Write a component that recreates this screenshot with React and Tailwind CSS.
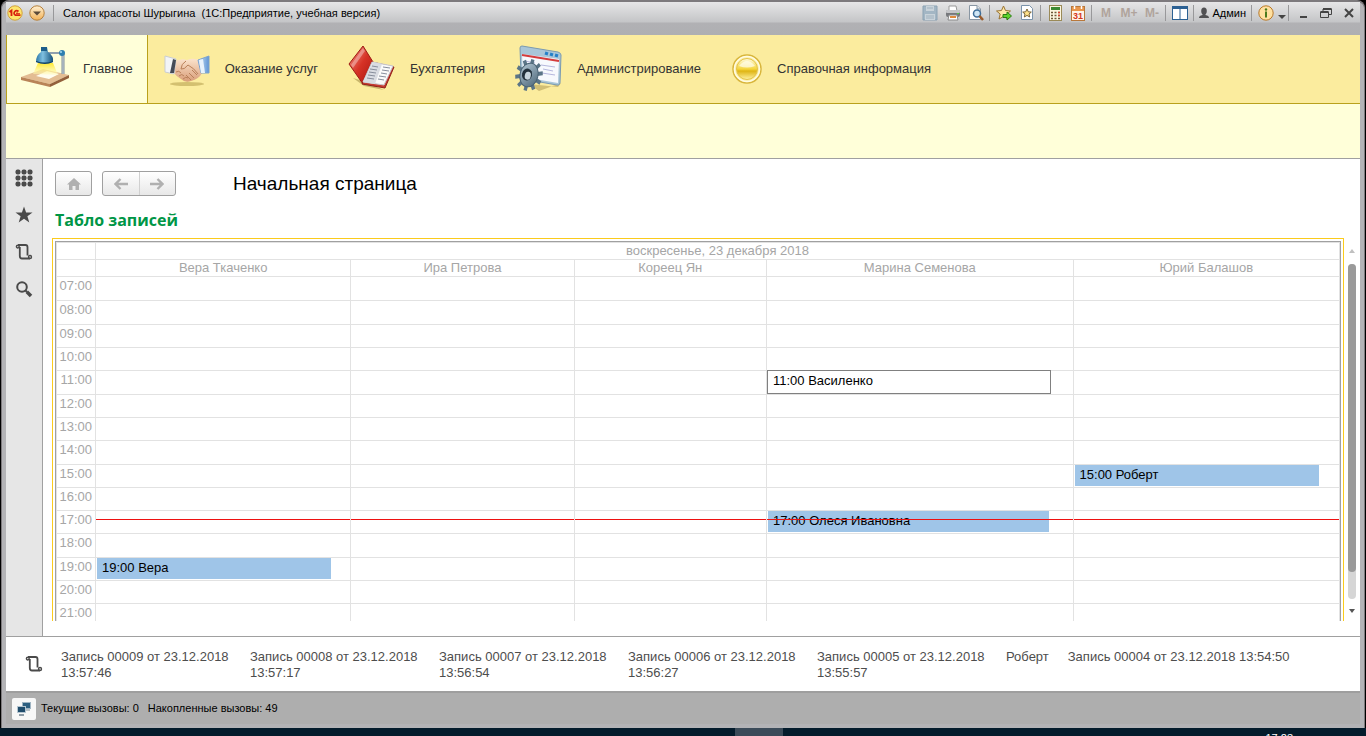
import React, { useState } from 'react';

const employees = [
  { name: 'Вера Ткаченко', col: 'w-[19.9%]' },
  { name: 'Ира Петрова', col: 'w-[17.4%]' },
  { name: 'Кореец Ян', col: 'w-[15%]' },
  { name: 'Марина Семенова', col: 'w-[23.9%]' },
  { name: 'Юрий Балашов', col: '' }
];

const hours = [
  { time: '07:00', tall: true },
  { time: '08:00', tall: true },
  { time: '09:00' },
  { time: '10:00' },
  { time: '11:00', tall: true },
  { time: '12:00' },
  { time: '13:00' },
  { time: '14:00', tall: true },
  { time: '15:00' },
  { time: '16:00' },
  { time: '17:00', now: true },
  { time: '18:00', tall: true },
  { time: '19:00' },
  { time: '20:00' },
  { time: '21:00' }
];

const bookings = [
  { time: '11:00', employee: 'Марина Семенова', client: 'Василенко' },
  { time: '15:00', employee: 'Юрий Балашов', client: 'Роберт' },
  { time: '17:00', employee: 'Марина Семенова', client: 'Олеся Ивановна' },
  { time: '19:00', employee: 'Вера Ткаченко', client: 'Вера' }
];

const historyItems = [
  { text: 'Запись 00009 от 23.12.2018 13:57:46', wrap: true },
  { text: 'Запись 00008 от 23.12.2018 13:57:17', wrap: true },
  { text: 'Запись 00007 от 23.12.2018 13:56:54', wrap: true },
  { text: 'Запись 00006 от 23.12.2018 13:56:27', wrap: true },
  { text: 'Запись 00005 от 23.12.2018 13:55:57', wrap: true },
  { text: 'Роберт' },
  { text: 'Запись 00004 от 23.12.2018 13:54:50' }
];

const LampIcon = () => (
  <svg width="48" height="48" viewBox="0 0 48 48">
    <defs>
      <linearGradient id="lampBeam" x1="0" y1="0" x2="0" y2="1">
        <stop offset="0" stopColor="#ffe92e" />
        <stop offset="1" stopColor="#fffbc4" stopOpacity="0.5" />
      </linearGradient>
      <linearGradient id="lampShade" x1="0" y1="0" x2="1" y2="0">
        <stop offset="0" stopColor="#2c78a8" />
        <stop offset="0.4" stopColor="#7fc0e0" />
        <stop offset="1" stopColor="#135079" />
      </linearGradient>
    </defs>
    <path d="M0 32 L22 24 L48 30 L29 39 Z" fill="#e3bd93" />
    <path d="M0 32 L29 39 V42 L0 35 Z" fill="#b98458" />
    <path d="M29 39 L48 30 V33 L29 42 Z" fill="#93603b" />
    <path d="M15 31 L26 26 L38 29 L28 34 Z" fill="#fffdf0" />
    <path d="M17 18 L32 18 L37 30 L12 29 Z" fill="url(#lampBeam)" />
    <path d="M42 9 V29" stroke="#7d8c99" strokeWidth="3" />
    <path d="M42 9 V29" stroke="#cfd8df" strokeWidth="1" />
    <path d="M26 8 H40" stroke="#8fa0ad" strokeWidth="2" />
    <path d="M20 2 L26 2 L27 7 Q33 11 32 17 Q24 20 15 17 Q15 10 20 7 Z" fill="url(#lampShade)" />
    <path d="M20 2 H26 V6 H20 Z" fill="#1d5e8a" />
    <path d="M15 16 Q24 19 32 16 V17 Q24 21 15 17 Z" fill="#0f4166" />
    <circle cx="41" cy="8" r="3" fill="#2d7fb0" />
    <circle cx="40" cy="7" r="1" fill="#a8d8ef" />
  </svg>
);

const HandshakeIcon = () => (
  <svg width="48" height="48" viewBox="0 0 48 48">
    <defs>
      <linearGradient id="skin" x1="0" y1="0" x2="0" y2="1">
        <stop offset="0" stopColor="#fbe3cc" />
        <stop offset="1" stopColor="#d99d78" />
      </linearGradient>
      <linearGradient id="cuffBlue" x1="0" y1="0" x2="1" y2="0">
        <stop offset="0" stopColor="#cfe5f7" />
        <stop offset="1" stopColor="#5d94d4" />
      </linearGradient>
    </defs>
    <ellipse cx="24" cy="39" rx="17" ry="2" fill="#b9a452" opacity="0.6" />
    <path d="M10 17 Q18 13 24 15 Q31 12 38 16 L39 28 Q36 34 28 36 Q22 38 18 34 Q13 31 10 27 Z" fill="url(#skin)" />
    <path d="M23 16 Q18 19 18 24 Q21 25 25 20 Q31 23 35 29" fill="none" stroke="#b9805a" strokeWidth="1" />
    <path d="M13 27 Q16 25 18 28 M16 31 Q19 28 21 31 M20 34 Q23 31 25 33 M26 28 L31 33 M23 30 L28 35 M29 25 L34 30" fill="none" stroke="#b9805a" strokeWidth="1" />
    <path d="M2 11 L13 14 L11 29 L2 27 Z" fill="#f2f4f7" stroke="#c9cdd3" strokeWidth="1" />
    <path d="M10 14 L13 15 L11 28 L7 28 Z" fill="#454b57" />
    <path d="M46 11 L35 15 L38 28 L46 28 Z" fill="url(#cuffBlue)" stroke="#7ca3cf" strokeWidth="1" />
    <path d="M36 15 L40 14 L42 28 L38 28 Z" fill="#e8f3fc" />
  </svg>
);

const LedgerIcon = () => (
  <svg width="48" height="48" viewBox="0 0 48 48">
    <defs>
      <linearGradient id="cover" x1="0" y1="0" x2="1" y2="1">
        <stop offset="0" stopColor="#f59a8c" />
        <stop offset="0.5" stopColor="#d63226" />
        <stop offset="1" stopColor="#a8150f" />
      </linearGradient>
    </defs>
    <path d="M5 33 L16 41 L36 45 L15 36 Z" fill="#a8924a" opacity="0.6" />
    <path d="M15 1 L25 17 L15 39 L1 19 Z" fill="url(#cover)" stroke="#9d1a14" strokeWidth="1" />
    <path d="M24 17 L46 22 L37 43 L14 39 Z" fill="#c63a30" stroke="#8f211b" strokeWidth="1" />
    <path d="M24 17 L45 21 L36 40 L15 37 Z" fill="#fafafa" stroke="#c6c6cc" strokeWidth="1" />
    <path d="M25 17 L34 19 L27 39 L15 37 Z" fill="#d9dce2" />
    <path d="M24 21 L30 22 M22 24 L29 25 M21 27 L28 28 M20 30 L27 31 M19 33 L26 34 M35 22 L42 23 M34 25 L41 26 M33 28 L39 29 M31 31 L38 32 M30 34 L36 35" stroke="#878e9c" strokeWidth="1" />
    <path d="M3 20 L15 3 L17 6 L5 23 Z" fill="#ffffff" opacity="0.35" />
  </svg>
);

const gearTeeth = [0, 36, 72, 108, 144, 180, 216, 252, 288, 324];

const AdminIcon = () => (
  <svg width="48" height="48" viewBox="0 0 48 48">
    <defs>
      <linearGradient id="gearFill" x1="0" y1="0" x2="1" y2="1">
        <stop offset="0" stopColor="#b5c9d6" />
        <stop offset="1" stopColor="#4c6678" />
      </linearGradient>
    </defs>
    <path d="M14 39 L43 42 L46 38 L24 46 Z" fill="#a8924a" opacity="0.5" />
    <path d="M7 1 L43 7 Q46 8 46 10 L45 38 Q44 41 42 40 L8 34 Q6 33 6 31 L5 3 Q5 1 7 1 Z" fill="#a9c6d8" stroke="#7a9ab0" strokeWidth="1" />
    <path d="M7 9 L44 14 L43 38 L8 32 Z" fill="#f7f9fd" />
    <path d="M7 10 L44 16" stroke="#d43c3c" strokeWidth="2" />
    <path d="M30 8 l3 1 M35 9 l3 1 M40 10 l3 1" stroke="#2580c8" strokeWidth="3" />
    <path d="M10 16 L20 18 M26 20 L40 22 M28 24 L38 26 M27 28 L40 30" stroke="#b5b7dd" strokeWidth="1" />
    <g transform="translate(14 30) rotate(14)">
      {gearTeeth.map(angle => (
        <rect key={angle} x="-2" y="-16" width="4" height="8" fill="#5b7587" transform={'scale(0.85 1) rotate(' + angle + ')'} />
      ))}
      <ellipse rx="9" ry="12" fill="url(#gearFill)" stroke="#4a6374" strokeWidth="1" />
      <ellipse cx="-2" rx="5" ry="6" fill="#22313c" />
      <ellipse cx="-1" cy="1" rx="3" ry="4" fill="#c8d6de" />
    </g>
  </svg>
);

const GoldDiscIcon = () => (
  <svg width="32" height="32" viewBox="0 0 32 32">
    <defs>
      <linearGradient id="goldDisc" x1="0" y1="0" x2="0" y2="1">
        <stop offset="0" stopColor="#fffbe0" />
        <stop offset="0.5" stopColor="#f5d63d" />
        <stop offset="0.6" stopColor="#dfb514" />
        <stop offset="1" stopColor="#fff2a0" />
      </linearGradient>
    </defs>
    <circle cx="16" cy="16" r="14" fill="#fbeea0" stroke="#d8b53c" strokeWidth="1.5" />
    <circle cx="16" cy="16" r="12.5" fill="none" stroke="#fffbe0" strokeWidth="1.5" />
    <circle cx="16" cy="16" r="10.5" fill="url(#goldDisc)" stroke="#e3c24a" strokeWidth="1" />
    <path d="M8 13 Q16 3 24 13 Q16 16 8 13 Z" fill="#fffdf0" opacity="0.7" />
  </svg>
);

const ScrollIcon = () => (
  <svg width="18" height="18" viewBox="0 0 18 18" fill="none" stroke="#4a4a4a" strokeWidth="1.8">
    <path d="M3 2 H10.5 Q12.5 2 12.5 4 V12.5" />
    <path d="M4.8 4 V13 Q4.8 15.5 7 15.5 H15" />
    <circle cx="2.8" cy="3.6" r="1.4" strokeWidth="1.4" />
    <circle cx="15" cy="14" r="1.5" strokeWidth="1.4" />
  </svg>
);

const GridIcon = () => (
  <svg width="18" height="18" viewBox="0 0 18 18" fill="#4a4a4a">
    {[3, 9, 15].map(y => [3, 9, 15].map(x => (
      <rect key={x + '-' + y} x={x - 2.5} y={y - 2.5} width="5" height="5" rx="2" />
    )))}
  </svg>
);

const StarIcon = () => (
  <svg width="18" height="18" viewBox="0 0 18 18">
    <path d="M9 0.5 L11.1 6.5 H17.5 L12.4 10.3 L14.3 16.5 L9 12.8 L3.7 16.5 L5.6 10.3 L0.5 6.5 H6.9 Z" fill="#4a4a4a" />
  </svg>
);

const SearchIcon = () => (
  <svg width="18" height="18" viewBox="0 0 18 18" fill="none" stroke="#4a4a4a">
    <circle cx="7" cy="7" r="4.8" strokeWidth="2" />
    <path d="M10.5 10.5 L12 12" strokeWidth="2" />
    <path d="M11.8 11.8 L16 16" strokeWidth="3.5" />
  </svg>
);

const SaveIcon = () => (
  <svg width="16" height="16" viewBox="0 0 16 16">
    <path d="M1 1 H15 V15 H1 Z" fill="#a3b6c4" stroke="#8ba2b3" />
    <path d="M4 1 H12 V6 H4 Z" fill="#c9d3da" />
    <path d="M3 9 H13 V15 H3 Z" fill="#c9d3da" />
    <path d="M4 11 H12 M4 13 H12 M5 3 H11" stroke="#9fb0bd" />
  </svg>
);

const PrinterIcon = () => (
  <svg width="16" height="16" viewBox="0 0 16 16">
    <path d="M4 1 H11 L12 6 H4 Z" fill="#fff" stroke="#999" />
    <rect x="1" y="5" width="14" height="7" rx="2" fill="#77797d" />
    <rect x="1" y="5" width="14" height="3" rx="1" fill="#c5c6c9" />
    <path d="M4 10 H12 L13 15 H3 Z" fill="#fff" stroke="#8a8a8a" />
    <path d="M5 12 H11" stroke="#e08a3c" strokeWidth="2" />
    <rect x="12" y="8" width="2" height="1" fill="#5bc44c" />
  </svg>
);

const PreviewIcon = () => (
  <svg width="16" height="16" viewBox="0 0 16 16">
    <path d="M1.5 0.5 H9 L12.5 4 V14.5 H1.5 Z" fill="#fff" stroke="#8996a3" />
    <path d="M9 0.5 V4 H12.5" fill="#dfe6ec" stroke="#8996a3" />
    <circle cx="9" cy="8.5" r="3.5" fill="#cfe6f5" stroke="#3f6f9a" strokeWidth="1.5" />
    <path d="M11.5 11 L15 15" stroke="#9a5a2a" strokeWidth="2.5" />
  </svg>
);

const AddFavoriteIcon = () => (
  <svg width="16" height="16" viewBox="0 0 16 16">
    <path d="M7.5 1 L9.5 5.5 L14.5 6 L10.8 9 L12 14 L7.5 11.5 L3 14 L4.2 9 L0.5 6 L5.5 5.5 Z" fill="#ffe9a8" stroke="#9a7433" />
    <path d="M7 9.5 H11 V7 L15.5 11 L11 15 V12.5 H7 Z" fill="#5fd42b" stroke="#2a7d13" />
  </svg>
);

const FavoritesIcon = () => (
  <svg width="16" height="16" viewBox="0 0 16 16">
    <path d="M2.5 0.5 H10.5 L13.5 3.5 V14.5 H2.5 Z" fill="#fff" stroke="#7b93aa" />
    <path d="M8 4 L9.3 6.8 L12.3 7.1 L10 9 L10.7 12 L8 10.4 L5.3 12 L6 9 L3.7 7.1 L6.7 6.8 Z" fill="#ffe28a" stroke="#7a6538" />
  </svg>
);

const CalculatorIcon = () => (
  <svg width="16" height="16" viewBox="0 0 16 16">
    <rect x="2.5" y="0.5" width="12" height="15" fill="#fdf7df" stroke="#9a8a58" />
    <rect x="4" y="2" width="9" height="3" fill="#3c8a34" />
    <path d="M4 7.5 H13 M4 10.5 H13 M4 13.5 H13" stroke="#6c5a3a" strokeWidth="1.5" strokeDasharray="2 1.5" />
    <path d="M11 7.5 H13 M11 10.5 H13" stroke="#d9432f" strokeWidth="1.5" />
  </svg>
);

const CalendarIcon = () => (
  <svg width="16" height="16" viewBox="0 0 16 16">
    <rect x="1.5" y="1.5" width="13" height="14" fill="#fff4e8" stroke="#b8783c" />
    <rect x="2" y="2" width="12" height="4" fill="#e8964c" />
    <path d="M4.5 1 V4 M11.5 1 V4" stroke="#fff" strokeWidth="1.5" />
    <text x="8" y="14" textAnchor="middle" fontFamily="Liberation Sans" fontWeight="bold" fontSize="9" fill="#d5361c">31</text>
  </svg>
);

const WindowsIcon = () => (
  <svg width="16" height="16" viewBox="0 0 16 16">
    <rect x="0.5" y="1.5" width="15" height="13" fill="#fff" stroke="#2c6193" />
    <rect x="0" y="1" width="16" height="3" fill="#2c6193" />
    <path d="M8 3 V15" stroke="#2c6193" />
  </svg>
);

const UserIcon = () => (
  <svg width="10" height="12" viewBox="0 0 10 12" fill="#505052">
    <ellipse cx="5" cy="4" rx="2.8" ry="3.5" />
    <path d="M0 11 Q0 8.5 3.5 8 V6 H6.5 V8 Q10 8.5 10 11 Z" />
  </svg>
);

const InfoIcon = () => (
  <svg width="16" height="16" viewBox="0 0 16 16">
    <circle cx="8" cy="8" r="7.2" fill="#ffe0a0" stroke="#b97a2a" />
    <circle cx="8" cy="4.5" r="1.2" fill="#4b7a1c" />
    <path d="M8 6.5 V12.5" stroke="#4b7a1c" strokeWidth="2" />
  </svg>
);

const LogoIcon = () => (
  <svg width="16" height="16" viewBox="0 0 16 16">
    <circle cx="8" cy="8" r="7.2" fill="#fde56c" stroke="#d0a13c" />
    <path d="M2.5 7 L4.5 5.5 V11" fill="none" stroke="#d8200f" strokeWidth="1.8" />
    <path d="M11.5 6.5 Q9.5 4.8 7.8 6.5 Q6 9 8.5 10.2 H13.5" fill="none" stroke="#d8200f" strokeWidth="1.7" />
    <path d="M11 8 Q9.5 7.5 9 8.5 H13" fill="none" stroke="#d8200f" strokeWidth="0.8" />
  </svg>
);

const MenuIcon = () => (
  <svg width="16" height="16" viewBox="0 0 16 16">
    <defs>
      <linearGradient id="menuFill" x1="0" y1="0" x2="0" y2="1">
        <stop offset="0" stopColor="#fff0d2" />
        <stop offset="1" stopColor="#f3b257" />
      </linearGradient>
    </defs>
    <circle cx="8" cy="8" r="7.2" fill="url(#menuFill)" stroke="#b5803c" />
    <path d="M4 6.5 H12 L8 10.5 Z" fill="#5b4a39" />
  </svg>
);

const ServerCallsIcon = () => (
  <svg width="16" height="16" viewBox="0 0 16 16">
    <rect x="6" y="1" width="9" height="7" fill="#9fb4c2" />
    <rect x="7" y="2" width="7" height="5" fill="#2d5f80" />
    <path d="M9 9 H14" stroke="#7b8c98" />
    <rect x="1" y="5" width="9" height="7" fill="#b5c6d1" />
    <rect x="2" y="6" width="7" height="5" fill="#1f4c6c" />
    <path d="M3 14 H8" stroke="#6d7f8c" strokeWidth="1.5" />
  </svg>
);

const sections = [
  { title: 'Главное', icon: LampIcon },
  { title: 'Оказание услуг', icon: HandshakeIcon },
  { title: 'Бухгалтерия', icon: LedgerIcon },
  { title: 'Администрирование', icon: AdminIcon },
  { title: 'Справочная информация', icon: GoldDiscIcon }
];

const Separator = () => <span className="w-px h-4 mx-[2px] bg-[#98989a]"></span>;

const ToolButton = ({ label, children }) => (
  <button type="button" aria-label={label} className="w-[23px] h-5 flex items-center justify-center text-[12px] font-bold text-[#b0a49c]">
    {children}
  </button>
);

const TitleBar = () => (
  <header className="h-[33px] shrink-0 bg-[linear-gradient(to_bottom,#e6e6e7_0px,#c4c5c7_20px,#b1b1b4_21px,#aeafb2_33px)]">
    <div className="h-[22px] flex items-center">
      <div className="flex items-center gap-[6px] pl-px">
        <button type="button" aria-label="1С"><LogoIcon /></button>
        <button type="button" aria-label="Главное меню"><MenuIcon /></button>
        <Separator />
      </div>
      <h1 className="grow pl-[7px] text-[11px] leading-4 whitespace-pre text-black">Салон красоты Шурыгина  (1С:Предприятие, учебная версия)</h1>
      <div className="flex items-center">
        <ToolButton label="Сохранить"><SaveIcon /></ToolButton>
        <ToolButton label="Печать"><PrinterIcon /></ToolButton>
        <ToolButton label="Предварительный просмотр"><PreviewIcon /></ToolButton>
        <Separator />
        <ToolButton label="Добавить в избранное"><AddFavoriteIcon /></ToolButton>
        <ToolButton label="Избранное"><FavoritesIcon /></ToolButton>
        <Separator />
        <ToolButton label="Калькулятор"><CalculatorIcon /></ToolButton>
        <ToolButton label="Календарь"><CalendarIcon /></ToolButton>
        <Separator />
        <ToolButton>M</ToolButton>
        <ToolButton>M+</ToolButton>
        <ToolButton>M-</ToolButton>
        <Separator />
        <ToolButton label="Окна"><WindowsIcon /></ToolButton>
        <Separator />
        <button type="button" className="flex items-center gap-[3px] px-[3px] text-[11px] text-black">
          <UserIcon />
          Админ
        </button>
        <Separator />
        <ToolButton label="О программе"><InfoIcon /></ToolButton>
        <button type="button" aria-label="Меню" className="w-[9px] h-5 flex items-end justify-center pb-1">
          <svg width="8" height="4" viewBox="0 0 8 4"><path d="M0 0 H8 L4 4 Z" fill="#444" /></svg>
        </button>
        <Separator />
        <ToolButton label="Свернуть">
          <svg width="12" height="12" viewBox="0 0 12 12"><path d="M3 10 H10" stroke="#444" strokeWidth="2" /></svg>
        </ToolButton>
        <ToolButton label="Восстановить">
          <svg width="12" height="12" viewBox="0 0 12 12" fill="none" stroke="#444">
            <path d="M3 4 V2 H11.5 V7.5 H9" />
            <path d="M3 2 H11.5" strokeWidth="2" />
            <path d="M0.5 5 H8.5 V10.5 H0.5 Z" />
            <path d="M0.5 5 H8.5" strokeWidth="2" />
          </svg>
        </ToolButton>
        <ToolButton label="Закрыть">
          <svg width="12" height="12" viewBox="0 0 12 12"><path d="M2 2 L10 10 M10 2 L2 10" stroke="#444" strokeWidth="2" /></svg>
        </ToolButton>
      </div>
    </div>
  </header>
);

const navButton = 'h-full grow flex items-center justify-center';

const Booking = ({ booking, selected, onSelect }) => (
  <button
    type="button"
    onClick={onSelect}
    className={selected
      ? 'absolute left-0 -top-px bottom-0 w-[93%] flex items-start border border-[#808080] bg-white pl-[5px] pt-px text-left text-black leading-[18px] whitespace-nowrap'
      : 'absolute left-px top-0 bottom-px w-[92%] flex items-start bg-[#9fc5e8] pl-[5px] pt-px text-left text-black leading-[18px] whitespace-nowrap'}
  >
    {booking.time} {booking.client}
  </button>
);

const Schedule = () => {
  const [selected, setSelected] = useState('11:00');

  return (
    <table className="w-full table-fixed border-separate border-spacing-0 border-l border-t border-[#e2e2e2] text-[13px] text-[#a6a6a6]">
      <colgroup>
        <col className="w-[39px]" />
        {employees.map(e => <col key={e.name} className={e.col} />)}
      </colgroup>
      <thead>
        <tr className="h-[17px]">
          <td className="border-r border-b border-[#e2e2e2]"></td>
          <th colSpan={5} className="p-0 border-r border-b border-[#e2e2e2] font-normal leading-4">воскресенье, 23 декабря 2018</th>
        </tr>
        <tr className="h-[17px]">
          <td className="border-r border-b border-[#e2e2e2]"></td>
          {employees.map(e => (
            <th key={e.name} className="p-0 border-r border-b border-[#e2e2e2] font-normal leading-4">{e.name}</th>
          ))}
        </tr>
      </thead>
      <tbody>
        {hours.map(hour => (
          <tr key={hour.time} className={hour.tall ? 'h-6' : 'h-[23px]'}>
            <th className="p-0 pr-[3px] border-r border-b border-[#e2e2e2] align-top text-right font-normal leading-[18px]">{hour.time}</th>
            {employees.map(e => {
              const booking = bookings.find(b => b.time === hour.time && b.employee === e.name);
              return (
                <td key={e.name} className="relative p-0 border-r border-b border-[#e2e2e2]">
                  {booking && (
                    <Booking
                      booking={booking}
                      selected={selected === booking.time}
                      onSelect={() => setSelected(booking.time)}
                    />
                  )}
                  {/* current time marker */}
                  {hour.now && <span className="absolute inset-x-0 top-2 h-px bg-[#ee1111]"></span>}
                </td>
              );
            })}
          </tr>
        ))}
      </tbody>
    </table>
  );
};

const App = () => {
  const [active, setActive] = useState('Главное');

  return (
    <div className="h-screen flex flex-col overflow-hidden bg-black font-['Liberation_Sans',Arial,sans-serif]">
      <div className="grow min-h-0 mx-px flex flex-col rounded-t-lg border-t-2 border-x border-[#7d7a7d] bg-[#b3b3b6] px-1 pb-1">
        <TitleBar />

        <nav className="h-[69px] shrink-0 flex bg-[#fbec9e] border-b border-[#b9a11c]">
          {sections.map(({ title, icon: Icon }) => (
            <button
              key={title}
              type="button"
              onClick={() => setActive(title)}
              className={active === title
                ? 'h-[68px] flex items-center gap-[14px] px-[14px] border-x border-[#b9a11c] bg-[#ffffd9] text-[13px] text-[#333333]'
                : 'h-[68px] flex items-center gap-[14px] px-[15px] text-[13px] text-[#333333]'}
            >
              <Icon />
              {title}
            </button>
          ))}
        </nav>
        <div className="h-[55px] shrink-0 bg-[#ffffd9] border-b border-[#a0a0a0]"></div>

        <div className="grow min-h-0 flex bg-white">
          <aside className="w-[37px] shrink-0 flex flex-col items-center gap-[19px] pt-[10px] bg-[#e6e6e6] border-r border-[#a0a0a0]">
            <button type="button" aria-label="Меню функций"><GridIcon /></button>
            <button type="button" aria-label="Избранное"><StarIcon /></button>
            <button type="button" aria-label="История"><ScrollIcon /></button>
            <button type="button" aria-label="Поиск"><SearchIcon /></button>
          </aside>

          <main className="grow min-w-0 flex flex-col pl-[9px] pt-3 pb-[15px]">
            <div className="flex items-center pl-[3px]">
              <button type="button" aria-label="Домой" className="w-[37px] h-[25px] flex items-center justify-center rounded-[3px] border border-[#a0a0a0] bg-linear-to-b from-white to-[#e8e8e8]">
                <svg width="16" height="14" viewBox="0 0 16 14"><path d="M8 1 L15 7.5 H13 V13 H9.5 V9 H6.5 V13 H3 V7.5 H1 Z" fill="#b0b0b0" /></svg>
              </button>
              <div className="w-[74px] h-[25px] ml-[10px] flex rounded-[3px] border border-[#a0a0a0] bg-linear-to-b from-white to-[#e8e8e8]">
                <button type="button" aria-label="Назад" className={navButton}>
                  <svg width="14" height="12" viewBox="0 0 14 12"><path d="M14 6 H2 M6.5 1 L1.5 6 L6.5 11" fill="none" stroke="#b0b0b0" strokeWidth="2.4" /></svg>
                </button>
                <span className="w-px h-full bg-[#d0d0d0]"></span>
                <button type="button" aria-label="Вперед" className={navButton}>
                  <svg width="14" height="12" viewBox="0 0 14 12"><path d="M0 6 H12 M7.5 1 L12.5 6 L7.5 11" fill="none" stroke="#b0b0b0" strokeWidth="2.4" /></svg>
                </button>
              </div>
              <h2 className="ml-[57px] text-[19px] leading-6 text-black">Начальная страница</h2>
            </div>
            <h3 className="mt-3 pl-[3px] text-[16px] leading-6 font-bold text-[#009646] font-['Open_Sans','Noto_Sans',sans-serif]">Табло записей</h3>

            <div className="grow min-h-0 mt-[6px] flex">
              <div className="grow min-w-0 overflow-hidden border-t border-x border-[#fbcb1c] px-[2px] pt-[2px]">
                <div className="border-t border-x border-[#a0a0a0]">
                  <Schedule />
                </div>
              </div>
              <div className="w-[16px] shrink-0 flex flex-col items-center pt-[11px] pb-2">
                <svg width="6" height="4" viewBox="0 0 6 4"><path d="M0 4 L3 0 L6 4 Z" fill="#c0c0c0" /></svg>
                <div className="grow w-2 mt-[11px] mb-[10px] rounded-full bg-[#d6d6d6]">
                  <div className="h-[92%] rounded-full bg-[#9a9a9a]"></div>
                </div>
                <svg width="6" height="4" viewBox="0 0 6 4"><path d="M0 0 L3 4 L6 0 Z" fill="#555555" /></svg>
              </div>
            </div>
          </main>
        </div>

        <section className="h-[55px] shrink-0 flex items-start bg-white border-t border-[#a0a0a0] text-[13px] leading-4 text-[#4d4d4d]">
          <div className="w-[55px] shrink-0 flex justify-center pt-[18px]"><ScrollIcon /></div>
          <div className="flex gap-[19px] pt-3">
            {historyItems.map(item => (
              <a key={item.text} href="#" className={item.wrap ? 'w-[170px]' : 'whitespace-nowrap'}>{item.text}</a>
            ))}
          </div>
        </section>

        <footer className="h-[33px] shrink-0 flex items-center gap-[5px] pl-[6px] bg-[#aeaeae] border-t-2 border-[#9e9e9e] text-[11px] text-black">
          <button type="button" aria-label="Вызовы сервера" className="w-6 h-[22px] flex items-center justify-center rounded-[2px] bg-[#f7f7f7]">
            <ServerCallsIcon />
          </button>
          <span>Текущие вызовы: 0</span>
          <span className="pl-1">Накопленные вызовы: 49</span>
        </footer>
      </div>

      <div className="h-2 shrink-0 flex justify-end overflow-hidden bg-[#041c2c]">
        <div className="w-12 bg-[#3b4b59]"></div>
        <div className="w-[583px] flex items-start justify-end pr-[73px] pt-1 text-[11px] leading-3 text-white">17:23</div>
      </div>
    </div>
  );
};

export default App;
